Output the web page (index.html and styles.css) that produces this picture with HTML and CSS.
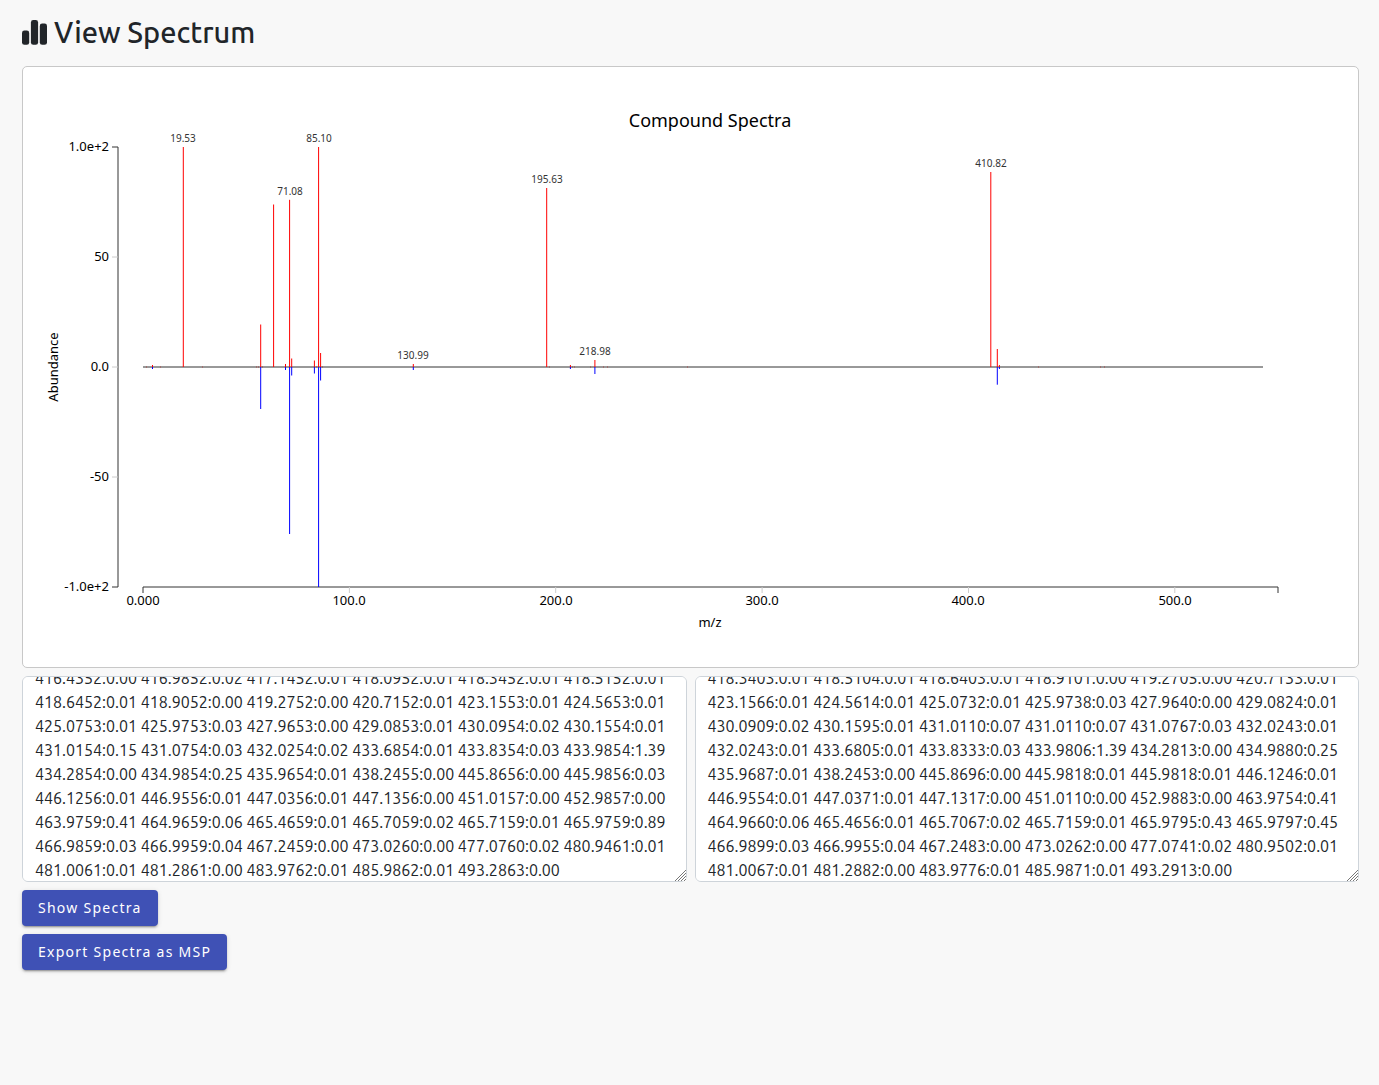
FILE: index.html
```html
<!DOCTYPE html>
<html lang="en">
<head>
<meta charset="utf-8">
<meta name="viewport" content="width=device-width, initial-scale=1">
<title>View Spectrum</title>
<link rel="stylesheet" href="styles.css">
</head>
<body>
<main class="page">
  <h1 class="page-title">
    <svg class="title-icon" viewBox="0 0 25 25" aria-hidden="true">
      <rect x="0" y="10.6" width="7.2" height="14.2" rx="2.4"/>
      <rect x="8.9" y="0" width="7.2" height="24.8" rx="2.4"/>
      <rect x="17.8" y="3.6" width="7.2" height="21.2" rx="2.4"/>
    </svg>
    <span>View Spectrum</span>
  </h1>

  <section class="card">
    <svg class="chart" viewBox="0 0 1335 600" role="img" aria-label="Compound Spectra">
      <text class="chart-title" x="687" y="60">Compound Spectra</text>

      <g class="axis">
        <path d="M89 80H95V520H89"/>
        <path class="tick" d="M89 190H95M89 300H95M89 410H95"/>
        <path d="M120 526V520H1255V526"/>
        <path class="tick" d="M326.4 520V526M532.7 520V526M739.1 520V526M945.5 520V526M1151.8 520V526"/>
        <path d="M120 300H1240"/>
      </g>

      <g class="label label-y">
        <text x="86" y="84">1.0e+2</text>
        <text x="86" y="194">50</text>
        <text x="86" y="304">0.0</text>
        <text x="86" y="414">-50</text>
        <text x="86" y="524">-1.0e+2</text>
      </g>
      <g class="label label-x">
        <text x="120" y="538">0.000</text>
        <text x="326" y="538">100.0</text>
        <text x="533" y="538">200.0</text>
        <text x="739" y="538">300.0</text>
        <text x="945" y="538">400.0</text>
        <text x="1152" y="538">500.0</text>
        <text x="687" y="560">m/z</text>
        <text transform="translate(35 300) rotate(-90)">Abundance</text>
      </g>

      <path class="peak-up" d="M129.5 300V298M160.3 300V80M237.7 300V257.5M250.6 300V137.5M262.5 300V297M266.6 300V132.8M268.7 300V291.5M291.4 300V293.5M295.6 300V80M297.6 300V286M390.3 300V297M523.7 300V121M547.4 300V298M571.9 300V293M967.8 300V105M974.3 300V282M976.4 300V298"/>
      <path class="peak-down" d="M129.5 300V302M237.7 300V342M262.5 300V303M266.6 300V467M268.7 300V308.5M291.4 300V306.5M295.6 300V520M297.6 300V313.5M390.3 300V303M547.4 300V302M571.9 300V307M974.3 300V317.7M976.4 300V302"/>
      <path class="trace" d="M123.5 301V299M137.5 301V299M179.5 301V299M233.5 301V299M235.5 301V299M239.5 301V299M293.5 301V299M299.5 301V299M526.5 301V299M549.5 301V299M551.5 301V299M567.5 301V299M580.5 301V299M584.5 301V299M664.5 301V299M1015.5 301V299M1077.5 301V299M1081.5 301V299"/>

      <g class="peak-label">
        <text x="160" y="75">19.53</text>
        <text x="267" y="128">71.08</text>
        <text x="296" y="75">85.10</text>
        <text x="390" y="292">130.99</text>
        <text x="524" y="116">195.63</text>
        <text x="572" y="288">218.98</text>
        <text x="968" y="100">410.82</text>
      </g>
    </svg>
  </section>

  <div class="spectra">
    <div class="spectrum-box">
      <textarea class="spectrum" aria-label="First spectrum">416.4352:0.00 416.9852:0.02 417.1452:0.01 418.0952:0.01 418.3452:0.01 418.5152:0.01 418.6452:0.01 418.9052:0.00 419.2752:0.00 420.7152:0.01 423.1553:0.01 424.5653:0.01 425.0753:0.01 425.9753:0.03 427.9653:0.00 429.0853:0.01 430.0954:0.02 430.1554:0.01 431.0154:0.15 431.0754:0.03 432.0254:0.02 433.6854:0.01 433.8354:0.03 433.9854:1.39 434.2854:0.00 434.9854:0.25 435.9654:0.01 438.2455:0.00 445.8656:0.00 445.9856:0.03 446.1256:0.01 446.9556:0.01 447.0356:0.01 447.1356:0.00 451.0157:0.00 452.9857:0.00 463.9759:0.41 464.9659:0.06 465.4659:0.01 465.7059:0.02 465.7159:0.01 465.9759:0.89 466.9859:0.03 466.9959:0.04 467.2459:0.00 473.0260:0.00 477.0760:0.02 480.9461:0.01 481.0061:0.01 481.2861:0.00 483.9762:0.01 485.9862:0.01 493.2863:0.00</textarea>
      <svg class="grip" viewBox="0 0 11 11" aria-hidden="true"><path d="M0 11L11 0M3 11L11 3M6 11L11 6M9 11L11 9"/></svg>
    </div>
    <div class="spectrum-box">
      <textarea class="spectrum" aria-label="Second spectrum">418.3403:0.01 418.5104:0.01 418.6403:0.01 418.9101:0.00 419.2705:0.00 420.7133:0.01 423.1566:0.01 424.5614:0.01 425.0732:0.01 425.9738:0.03 427.9640:0.00 429.0824:0.01 430.0909:0.02 430.1595:0.01 431.0110:0.07 431.0110:0.07 431.0767:0.03 432.0243:0.01 432.0243:0.01 433.6805:0.01 433.8333:0.03 433.9806:1.39 434.2813:0.00 434.9880:0.25 435.9687:0.01 438.2453:0.00 445.8696:0.00 445.9818:0.01 445.9818:0.01 446.1246:0.01 446.9554:0.01 447.0371:0.01 447.1317:0.00 451.0110:0.00 452.9883:0.00 463.9754:0.41 464.9660:0.06 465.4656:0.01 465.7067:0.02 465.7159:0.01 465.9795:0.43 465.9797:0.45 466.9899:0.03 466.9955:0.04 467.2483:0.00 473.0262:0.00 477.0741:0.02 480.9502:0.01 481.0067:0.01 481.2882:0.00 483.9776:0.01 485.9871:0.01 493.2913:0.00</textarea>
      <svg class="grip" viewBox="0 0 11 11" aria-hidden="true"><path d="M0 11L11 0M3 11L11 3M6 11L11 6M9 11L11 9"/></svg>
    </div>
  </div>

  <div class="actions">
    <button class="button" type="button">Show Spectra</button>
    <button class="button" type="button">Export Spectra as MSP</button>
  </div>
</main>
<script src="script.js"></script>
</body>
</html>
```

FILE: styles.css
```css
* {
  box-sizing: border-box;
}

body {
  margin: 0;
  background: #f8f8f8;
  color: #212529;
  font-family: "Noto Sans", sans-serif;
  font-size: 16px;
}

.page {
  display: flex;
  flex-direction: column;
  gap: 8px;
  padding: 16px 20px 16px 22px;
}

.page-title {
  display: flex;
  align-items: center;
  gap: 7px;
  margin: 0 0 9px;
  font-family: Ubuntu, "Noto Sans", sans-serif;
  font-size: 29px;
  font-weight: 500;
  line-height: 33px;
}

.title-icon {
  width: 25px;
  height: 25px;
  fill: currentColor;
}

.card {
  border: 1px solid #c8c8c8;
  border-radius: 5px;
  background: #fff;
}

.chart {
  display: block;
  width: 100%;
  height: auto;
}

.chart-title {
  font-size: 18px;
  text-anchor: middle;
}

.axis path {
  fill: none;
  stroke: #333;
}

.axis .tick {
  stroke: #ccc;
}

.label {
  font-size: 13px;
}

.label-y {
  text-anchor: end;
}

.label-x,
.peak-label {
  text-anchor: middle;
}

.peak-label {
  fill: #333;
  font-size: 10px;
}

.peak-up {
  stroke: #f00;
}

.peak-down {
  stroke: #00f;
}

.trace {
  stroke: #a33;
  opacity: 0.4;
}

.spectra {
  display: flex;
  gap: 8px;
}

.spectrum-box {
  position: relative;
  display: flex;
  flex: 1;
  min-width: 0;
}

.spectrum {
  flex: 1;
  min-width: 0;
  height: 206px;
  padding: 6px 12px;
  border: 1px solid #ced4da;
  border-radius: 6px;
  background: #fff;
  color: #212529;
  font-family: Ubuntu, Roboto, sans-serif;
  font-size: 16px;
  line-height: 24px;
  resize: vertical;
  scrollbar-width: none;
}

.grip {
  position: absolute;
  right: 1px;
  bottom: 1px;
  width: 11px;
  height: 11px;
  background: #fff;
  fill: none;
  stroke: #777;
  pointer-events: none;
}

.actions {
  display: flex;
  flex-direction: column;
  align-items: flex-start;
  gap: 8px;
}

.button {
  height: 36px;
  padding: 0 16px 2px;
  border: 0;
  border-radius: 4px;
  background: #3f51b5;
  box-shadow: 0 3px 1px -2px rgba(0, 0, 0, 0.2), 0 2px 2px rgba(0, 0, 0, 0.14), 0 1px 5px rgba(0, 0, 0, 0.12);
  color: #fff;
  font-family: inherit;
  font-size: 14px;
  letter-spacing: 0.09em;
}
```

FILE: script.js
```js
// Open each spectrum list scrolled past its first rows.
document.querySelectorAll(".spectrum").forEach((area) => {
  area.scrollTop = 17;
});
```
